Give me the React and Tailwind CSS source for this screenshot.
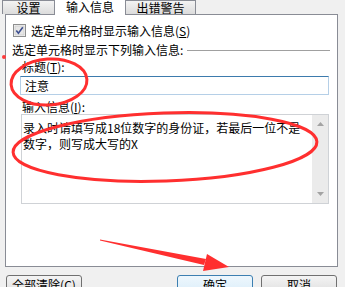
import React from 'react'

const Tab = ({ children, className = '' }) => (
  <div
    className={`flex h-[14px] items-center justify-center border-t border-[#898c95] bg-linear-to-b from-[#f3f3f3] to-[#dcdcdc] ${className}`}
  >
    {children}
  </div>
)

const Button = ({ children, primary = false, className = '' }) => (
  <div
    className={`flex h-[23px] w-[76px] justify-center rounded-[3px] border pt-[2px] ${
      primary
        ? 'border-[#3c7fb1] bg-linear-to-b from-[#eef7fd] to-[#d6ebf9]'
        : 'border-[#707070] bg-linear-to-b from-[#f4f4f4] to-[#dadada]'
    } ${className}`}
  >
    {children}
  </div>
)

const Checkbox = () => (
  <svg width="13" height="13" viewBox="0 0 13 13">
    <rect x="0.5" y="0.5" width="12" height="12" fill="#f4f4f4" stroke="#8e8f8f" />
    <rect x="2" y="2" width="9" height="9" fill="#e6e6e6" stroke="#c4c4c4" strokeWidth="0.6" />
    <path d="M3.3 6.4 L5.4 9.2 L9.8 3.2" fill="none" stroke="#3d4f8f" strokeWidth="1.6" />
  </svg>
)

const Overlay = () => (
  <svg
    className="pointer-events-none absolute left-0 top-0 z-20"
    width="345"
    height="287"
    viewBox="0 0 345 287"
  >
    <circle cx="4" cy="57" r="2" fill="#ff3b3b" />
    <ellipse
      cx="49"
      cy="82"
      rx="38"
      ry="23"
      transform="rotate(-4 49 82)"
      fill="none"
      stroke="#ff2f2f"
      strokeWidth="3"
    />
    <ellipse
      cx="165"
      cy="147"
      rx="152"
      ry="34"
      transform="rotate(-2 165 147)"
      fill="none"
      stroke="#ff2f2f"
      strokeWidth="3"
    />
    <polygon points="100,239.5 100,240.5 204,265 206,259" fill="#ff2f2f" />
    <polygon points="207,254 203,271 229,267" fill="#ff2f2f" />
  </svg>
)

export default function App() {
  return (
    <div className="relative h-[287px] w-[345px] overflow-hidden bg-[#f0f0f0] font-['Noto_Sans_CJK_SC',sans-serif] text-[12px] leading-[14px] text-black">
      {/* tabs */}
      <div className="relative z-10 flex h-[14px] items-start pl-[2px]">
        <Tab className="w-[52px] border-l">设置</Tab>
        <div className="flex h-[15px] w-[72px] items-start justify-center border-x border-[#898c95] bg-white">
          输入信息
        </div>
        <Tab className="w-[70px] border-r">出错警告</Tab>
      </div>

      {/* panel */}
      <div className="ml-[5px] flex h-[253px] w-[333px] flex-col border border-[#898c95] bg-white">
        <div className="mt-[9px] flex h-[13px] items-center pl-[7px]">
          <Checkbox />
          <span className="ml-[5px]">
            选定单元格时显示输入信息(<u>S</u>)
          </span>
        </div>

        <div className="mt-[6px] flex h-[14px] items-center pl-[6px] pr-[7px]">
          <span>选定单元格时显示下列输入信息:</span>
          <div className="ml-[4px] h-px flex-1 bg-[#a0a0a0]" />
        </div>

        <div className="mt-[3px] h-[14px] pl-[16px]">
          标题(<u>T</u>):
        </div>
        <div className="ml-[14px] mt-[2px] flex h-[19px] w-[309px] items-center border border-[#b5cfe7] border-t-[#3d7bad] pl-[4px]">
          注意
        </div>

        <div className="mt-[5px] h-[14px] pl-[16px]">
          输入信息(<u>I</u>):
        </div>
        <div className="ml-[15px] flex h-[90px] w-[308px] border border-[#cfd2d6]">
          <div className="flex-1 pl-[1px] pt-[5px] leading-[16px]">
            <div>录入时请填写成18位数字的身份证，若最后一位不是</div>
            <div>数字，则写成大写的X</div>
          </div>
          <div className="flex w-[16px] flex-col items-center justify-between bg-[#ebebeb] py-[7px]">
            <svg width="7" height="4" viewBox="0 0 7 4">
              <polygon points="0,4 7,4 3.5,0" fill="#a3a3a3" />
            </svg>
            <svg width="7" height="4" viewBox="0 0 7 4">
              <polygon points="0,0 7,0 3.5,4" fill="#a3a3a3" />
            </svg>
          </div>
        </div>
      </div>

      {/* buttons */}
      <div className="mt-[8px] flex pr-[8px]">
        <Button className="ml-[6px]">
          全部清除(<u>C</u>)
        </Button>
        <Button primary className="ml-auto">
          确定
        </Button>
        <Button className="ml-[8px]">取消</Button>
      </div>

      <Overlay />
    </div>
  )
}
